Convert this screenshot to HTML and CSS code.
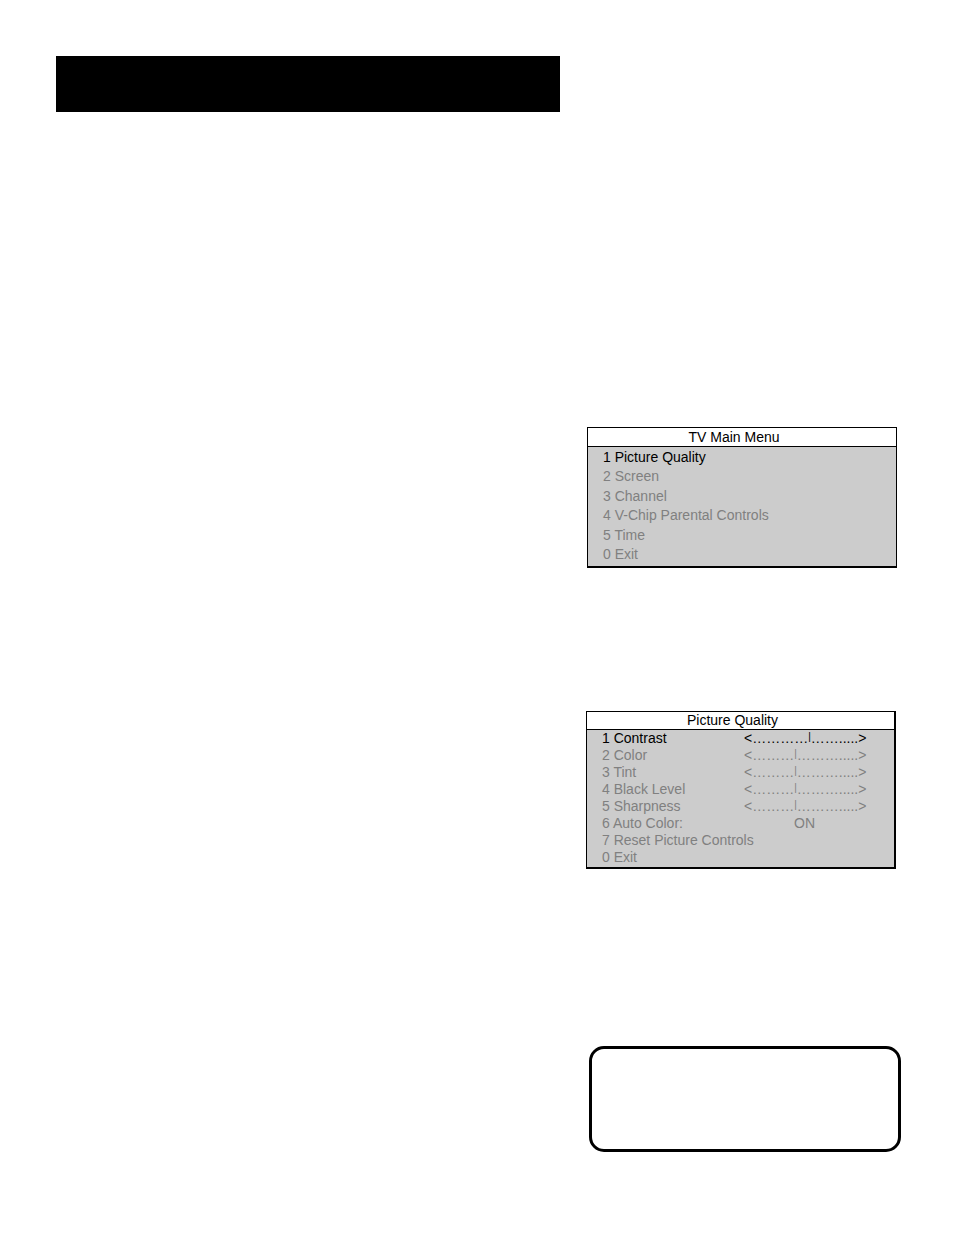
FILE: index.html
```
<!DOCTYPE html>
<html lang="en">
    <head>
        <meta charset="utf-8">
        <title>Picture Quality Menu</title>
        <meta name="viewport" content="width=device-width, initial-scale=1.0">
        <link rel="stylesheet" href="styles.css">
    </head>
    <body>
        <div class="page">
            <header class="banner"></header>
            <aside class="figures">
                <section class="menu main-menu">
                    <h2>TV Main Menu</h2>
                    <ul>
                        <li class="active">1 Picture Quality</li>
                        <li>2 Screen</li>
                        <li>3 Channel</li>
                        <li>4 V-Chip Parental Controls</li>
                        <li>5 Time</li>
                        <li>0 Exit</li>
                    </ul>
                </section>
                <section class="menu quality-menu">
                    <h2>Picture Quality</h2>
                    <ul>
                        <li class="active">1 Contrast <span class="level">&lt;…………<span class="mark">|</span>…….....&gt;</span></li>
                        <li>2 Color <span class="level">&lt;………<span class="mark">|</span>……….....&gt;</span></li>
                        <li>3 Tint <span class="level">&lt;………<span class="mark">|</span>……….....&gt;</span></li>
                        <li>4 Black Level <span class="level">&lt;………<span class="mark">|</span>……….....&gt;</span></li>
                        <li>5 Sharpness <span class="level">&lt;………<span class="mark">|</span>……….....&gt;</span></li>
                        <li>6 Auto Color: <span class="level state">ON</span></li>
                        <li>7 Reset Picture Controls</li>
                        <li>0 Exit</li>
                    </ul>
                </section>
                <div class="note"></div>
            </aside>
        </div>
    </body>
</html>
```
FILE: styles.css
```
* {
    box-sizing: border-box;
}
body {
    margin: 0;
    background-color: #fff;
    color: #000;
    font-family: "Liberation Sans", Arial, sans-serif;
    font-size: 14px;
}
h2, ul {
    margin: 0;
    padding: 0;
}
.page {
    display: grid;
    grid-template-columns: 8fr 5fr;
    column-gap: 26px;
    padding: 56px 53px 83px 56px;
}
.banner {
    height: 56px;
    background-color: #000;
}
.figures {
    padding-top: 371px;
}
.menu {
    margin-right: 5px;
    border: 1px solid #000;
    background-color: #ccc;
}
.menu h2 {
    padding-right: 16px;
    border-bottom: 1px solid #000;
    background-color: #fff;
    font-size: 14px;
    font-weight: normal;
    text-align: center;
}
.menu ul {
    display: grid;
    padding-left: 15px;
    list-style: none;
    color: #808080;
}
.menu li {
    display: grid;
    grid-template-columns: 142px 1fr;
    align-items: center;
    white-space: nowrap;
}
.menu .active {
    color: #000;
}
.main-menu {
    margin-right: 4px;
    margin-left: 1px;
    border-bottom-width: 2px;
}
.main-menu h2 {
    line-height: 18px;
}
.main-menu ul {
    height: 119px;
    padding-bottom: 2px;
}
.quality-menu {
    margin-top: 143px;
    border-right-width: 2px;
    border-bottom-width: 2px;
}
.quality-menu h2 {
    line-height: 17px;
}
.quality-menu ul {
    padding-bottom: 1px;
    line-height: 17px;
}
.mark {
    font-size: 10px;
    line-height: 1;
    vertical-align: 3px;
}
.state {
    padding-left: 50px;
}
.note {
    height: 106px;
    margin-top: 177px;
    margin-left: 3px;
    border: 3px solid #000;
    border-radius: 15px;
}
```
